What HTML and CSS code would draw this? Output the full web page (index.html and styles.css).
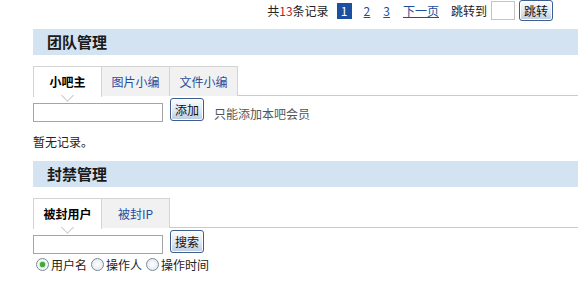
FILE: index.html
```html
<!DOCTYPE html>
<html>
  <head>
    <title>吧务管理</title>
    <link rel="stylesheet" href="styles.css">
  </head>
  <body>
    <div class="pager">
      <span class="total">共<em>13</em>条记录</span>
      <span class="cur">1</span>
      <a href="#">2</a>
      <a href="#">3</a>
      <a href="#">下一页</a>
      <span class="jump">跳转到</span>
      <input type="text" class="jump-input" />
      <button class="btn">跳转</button>
    </div>

    <div class="section">
      <h3 class="section-head">团队管理</h3>
      <ul class="tabs">
        <li class="on">小吧主</li>
        <li>图片小编</li>
        <li>文件小编</li>
      </ul>
      <div class="row">
        <input type="text" class="field" />
        <button class="btn">添加</button>
        <span class="tip">只能添加本吧会员</span>
      </div>
      <p class="empty">暂无记录。</p>
    </div>

    <div class="section">
      <h3 class="section-head">封禁管理</h3>
      <ul class="tabs">
        <li class="on">被封用户</li>
        <li>被封IP</li>
      </ul>
      <div class="row">
        <input type="text" class="field" />
        <button class="btn">搜索</button>
      </div>
      <div class="radios">
        <label><input type="radio" name="by" checked />用户名</label>
        <label><input type="radio" name="by" />操作人</label>
        <label><input type="radio" name="by" />操作时间</label>
      </div>
    </div>
  </body>
</html>
```

FILE: styles.css
```css
body {
  margin: 0;
  font-family: "Noto Sans CJK SC", "DejaVu Sans", sans-serif;
  font-size: 12px;
  color: #222;
  background: #fff;
  overflow: hidden;
}
.pager {
  display: flex;
  justify-content: flex-end;
  align-items: center;
  height: 21px;
  padding-right: 25px;
}
.pager .total em {
  font-style: normal;
  color: #c8102e;
}
.pager a {
  color: #1f4e9e;
  margin-left: 13px;
}
.pager .cur {
  display: inline-block;
  width: 15px;
  height: 16px;
  line-height: 16px;
  text-align: center;
  background: #1d4f9f;
  color: #fff;
  margin-left: 8px;
  margin-right: -1px;
}
.pager .jump {
  margin-left: 12px;
}
.jump-input {
  width: 20px;
  height: 15px;
  margin: 0 4px 0 4px;
  border: 1px solid #c4c4c4;
  padding: 1px;
}
.btn {
  font-family: inherit;
  font-size: 12px;
  color: #111;
  height: 21px;
  padding: 0 4px;
  border: 1px solid #3d5f8f;
  border-radius: 3px;
  background: linear-gradient(#fbfcfe, #dce5f1 60%, #bccbe0);
  box-shadow: inset 0 0 0 1px #fff;
  line-height: 17px;
}
.section {
  margin-left: 33px;
}
.section-head {
  margin: 8px 0 0 0;
  height: 26px;
  line-height: 26px;
  padding-left: 14px;
  background: #d4e3f2;
  font-size: 15px;
  font-weight: bold;
  color: #1a1a1a;
}
.tabs {
  list-style: none;
  margin: 11px 0 0 0;
  padding: 0;
  display: flex;
  border-bottom: 1px solid #cacaca;
  height: 29px;
}
.tabs li {
  position: relative;
  width: 67px;
  height: 29px;
  line-height: 29px;
  text-align: center;
  background: #f1f1f1;
  color: #1f4e9e;
  border: 1px solid #d4d4d4;
  border-bottom: none;
  border-left: none;
}
.tabs li:first-child {
  border-left: 1px solid #d4d4d4;
}
.tabs li.on {
  background: #fff;
  color: #000;
  font-weight: bold;
  height: 30px;
}
.tabs li.on::after {
  content: "";
  position: absolute;
  left: 29px;
  top: 24px;
  width: 8px;
  height: 8px;
  background: #fff;
  border-right: 1px solid #c8c8c8;
  border-bottom: 1px solid #c8c8c8;
  transform: rotate(45deg);
}
.row {
  display: flex;
  align-items: flex-start;
  margin-top: 2px;
  height: 27px;
}
.field {
  width: 124px;
  height: 15px;
  margin-top: 5px;
  padding: 1px 2px;
  border: 1px solid #a5a5a5;
}
.row .btn {
  height: 23px;
  margin-left: 7px;
}
.tip {
  margin-left: 10px;
  margin-top: 7px;
  color: #555;
}
.empty {
  margin: 8px 0 0 0;
  line-height: 18px;
  height: 20px;
}
.radios {
  display: flex;
  align-items: center;
  margin-top: -1px;
}
.radios label {
  display: flex;
  align-items: center;
  margin-right: 1px;
}
.radios input {
  appearance: none;
  width: 13px;
  height: 13px;
  margin: 0 2px 0 3px;
  border: 1px solid #7a8a99;
  border-radius: 50%;
  background: radial-gradient(#ffffff, #dde3ea);
}
.radios input:checked {
  background: radial-gradient(circle, #3fae2f 0 2.5px, #c9e8c0 3px, #f4f6f8 4px);
}
```
